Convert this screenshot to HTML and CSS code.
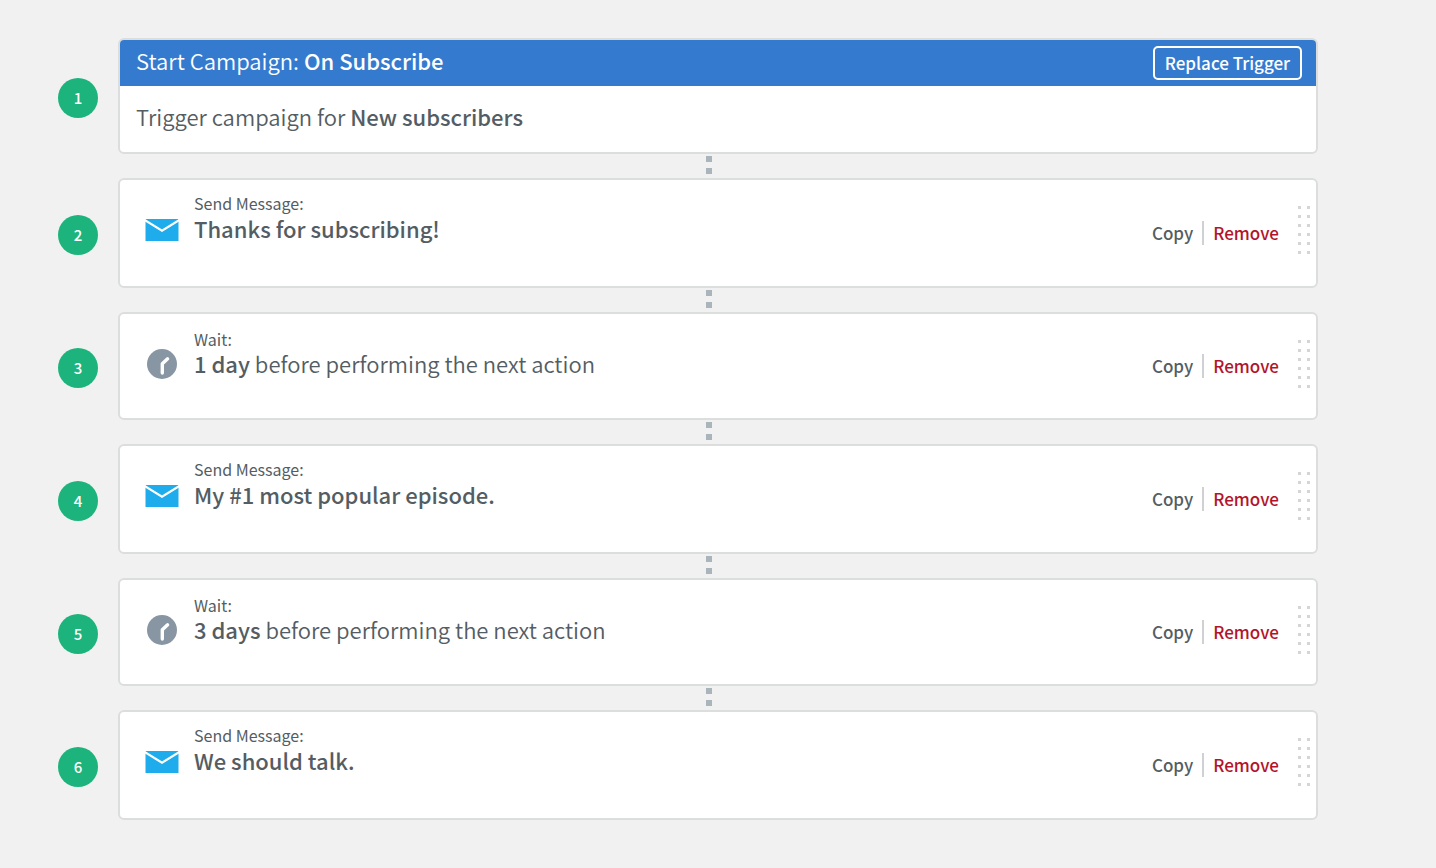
FILE: index.html
```html
<!DOCTYPE html>
<html lang="en">
<head>
<meta charset="utf-8">
<meta name="viewport" content="width=device-width, initial-scale=1">
<title>Campaign steps</title>
<link rel="stylesheet" href="styles.css">
</head>
<body>
<svg class="defs" aria-hidden="true">
  <symbol id="envelope" viewBox="0 0 34 22">
    <path fill="#1eaced" d="M.5 0H33.500V22H.5Z"/>
    <path fill="none" stroke="#fff" stroke-width="2.200" d="M-1 .6L17 11.600L35 .6"/>
  </symbol>
  <symbol id="clock" viewBox="0 0 30 30">
    <circle cx="15" cy="15" r="15" fill="#8796a2"/>
    <path fill="none" stroke="#fff" stroke-width="3.400" stroke-linecap="round" stroke-linejoin="round" d="M15.300 24V14.800L20.600 9.800"/>
  </symbol>
  <symbol id="grip" viewBox="0 0 12 48">
    <path fill="none" stroke="#d3d5d6" stroke-width="3" stroke-dasharray="3 6" d="M1.500 0V48M10.500 0V48"/>
  </symbol>
</svg>
<main>
  <ol class="steps">
    <li class="step">
      <span class="badge">1</span>
      <section class="card">
        <header class="trigger-head">
          <h1 class="title">Start Campaign: <strong>On Subscribe</strong></h1>
          <button class="replace" type="button">Replace Trigger</button>
        </header>
        <p class="trigger-body title">Trigger campaign for <strong>New subscribers</strong></p>
      </section>
    </li>
    <li class="step linked">
      <span class="badge">2</span>
      <section class="card action message">
        <svg class="icon-mail"><use href="#envelope"/></svg>
        <div class="text"><p class="label">Send Message:</p><p class="title"><strong>Thanks for subscribing!</strong></p></div>
        <div class="controls"><button type="button">Copy</button><button class="remove" type="button">Remove</button></div>
        <svg class="grip"><use href="#grip"/></svg>
      </section>
    </li>
    <li class="step linked">
      <span class="badge">3</span>
      <section class="card action wait">
        <svg class="icon-clock"><use href="#clock"/></svg>
        <div class="text"><p class="label">Wait:</p><p class="title"><strong>1 day</strong> before performing the next action</p></div>
        <div class="controls"><button type="button">Copy</button><button class="remove" type="button">Remove</button></div>
        <svg class="grip"><use href="#grip"/></svg>
      </section>
    </li>
    <li class="step linked">
      <span class="badge">4</span>
      <section class="card action message">
        <svg class="icon-mail"><use href="#envelope"/></svg>
        <div class="text"><p class="label">Send Message:</p><p class="title"><strong>My #1 most popular episode.</strong></p></div>
        <div class="controls"><button type="button">Copy</button><button class="remove" type="button">Remove</button></div>
        <svg class="grip"><use href="#grip"/></svg>
      </section>
    </li>
    <li class="step linked">
      <span class="badge">5</span>
      <section class="card action wait">
        <svg class="icon-clock"><use href="#clock"/></svg>
        <div class="text"><p class="label">Wait:</p><p class="title"><strong>3 days</strong> before performing the next action</p></div>
        <div class="controls"><button type="button">Copy</button><button class="remove" type="button">Remove</button></div>
        <svg class="grip"><use href="#grip"/></svg>
      </section>
    </li>
    <li class="step linked">
      <span class="badge">6</span>
      <section class="card action message">
        <svg class="icon-mail"><use href="#envelope"/></svg>
        <div class="text"><p class="label">Send Message:</p><p class="title"><strong>We should talk.</strong></p></div>
        <div class="controls"><button type="button">Copy</button><button class="remove" type="button">Remove</button></div>
        <svg class="grip"><use href="#grip"/></svg>
      </section>
    </li>
  </ol>
</main>
</body>
</html>
```
FILE: styles.css
```css
* { box-sizing: border-box; }
body {
  margin: 0;
  background: #f1f1f1;
  color: #545d63;
  font-family: "Noto Sans CJK SC", "Noto Sans", sans-serif;
}
p, h1, ol { margin: 0; padding: 0; }
strong { font-weight: 500; }
button { font: inherit; background: none; cursor: pointer; }
.defs { position: absolute; width: 0; height: 0; }
main { padding: 38px 118px 48px 58px; }
.steps { list-style: none; }
.step {
  display: grid;
  grid-template-columns: 40px 1fr;
  column-gap: 20px;
  align-items: center;
}
.linked::before {
  content: "";
  grid-column: 2;
  justify-self: center;
  width: 6px;
  height: 18px;
  margin: 2px 18px 4px 0;
  background: linear-gradient(#a9b5bb 6px, transparent 6px 12px, #a9b5bb 12px);
}
.badge {
  grid-column: 1;
  height: 40px;
  margin-top: 3px;
  border-radius: 50%;
  background: #1cb47c;
  color: #fff;
  font-size: 15px;
  font-weight: 500;
  line-height: 40px;
  text-align: center;
}
.card {
  grid-column: 2;
  background: #fff;
  border: 2px solid #dcdddd;
  border-radius: 6px;
}
.title {
  font-size: 22px;
  font-weight: 350;
  line-height: 26px;
}
.label {
  font-size: 16px;
  font-weight: 400;
  line-height: 24px;
}
.trigger-head {
  display: flex;
  align-items: flex-start;
  justify-content: space-between;
  padding: 6px 14px 6px 16px;
  border-radius: 4px 4px 0 0;
  background: #347bd0;
  color: #fff;
}
.trigger-head .title { padding-top: 1px; }
.replace {
  height: 34px;
  padding: 0 10px;
  border: 2px solid #fff;
  border-radius: 5px;
  color: #fff;
  font-size: 17px;
  font-weight: 500;
  line-height: 28px;
}
.trigger-body { padding: 17px 16px 23px; }
.action {
  display: grid;
  grid-template-columns: 34px 1fr auto 12px;
  column-gap: 15px;
  align-items: center;
  padding: 0 6px 0 25px;
}
.message { min-height: 110px; }
.wait { min-height: 108px; }
.text { align-self: start; padding-top: 11px; }
.wait .text { padding-top: 14px; }
.wait .label { line-height: 22px; }
.icon-mail { align-self: start; width: 34px; height: 22px; margin-top: 39px; }
.icon-clock { align-self: start; justify-self: center; width: 30px; height: 30px; margin-top: 35px; }
.controls { display: flex; align-items: center; }
.controls button {
  padding: 0 9px;
  border: 0;
  color: #545d63;
  font-size: 17px;
  font-weight: 500;
  line-height: 24px;
}
.controls .remove {
  padding-right: 4px;
  border-left: 2px solid #cfd1d2;
  color: #b3142a;
}
.grip { align-self: start; width: 12px; height: 48px; margin-top: 26px; }
```
